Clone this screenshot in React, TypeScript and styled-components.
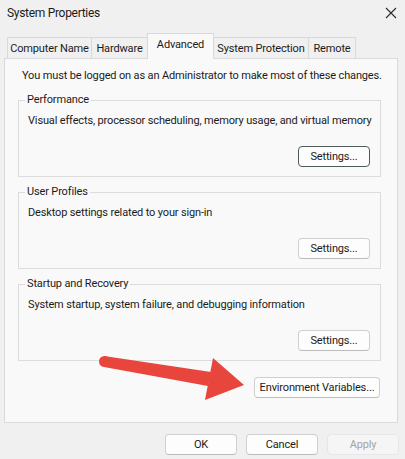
import React from 'react';
import styled, { createGlobalStyle, css } from 'styled-components';

const Global = createGlobalStyle`
  html, body { margin: 0; padding: 0; background: #f0f0f0; }
  body { font-family: Roboto, "Liberation Sans", Arial, sans-serif; }
`;

const Window = styled.div`
  position: relative;
  width: 405px;
  height: 459px;
  background: #f0f0f0;
  color: #1b1b1b;
  font-size: 11px;
  letter-spacing: -0.15px;
  display: flex;
  flex-direction: column;
  overflow: hidden;
`;

const TitleBar = styled.div`
  height: 26px;
  flex: none;
  display: flex;
  align-items: center;
  justify-content: space-between;
  padding: 0 8px 0 7px;
`;

const Title = styled.span`
  font-size: 12px;
  letter-spacing: -0.3px;
  color: #1b1b1b;
`;

const CloseIcon = styled.svg`
  width: 12px;
  height: 12px;
  display: block;
`;

const TabStrip = styled.div`
  height: 32px;
  flex: none;
  display: flex;
  align-items: flex-end;
  padding-left: 7px;
  position: relative;
  z-index: 1;
`;

const Tab = styled.div<{ $w: number; $active?: boolean }>`
  box-sizing: border-box;
  width: ${(p) => p.$w}px;
  height: ${(p) => (p.$active ? 26 : 21)}px;
  margin-bottom: ${(p) => (p.$active ? -1 : 0)}px;
  margin-left: -1px;
  border: 1px solid #d9d9d9;
  border-bottom: none;
  background: ${(p) => (p.$active ? '#f9f9f9' : '#f0f0f0')};
  display: flex;
  align-items: center;
  justify-content: center;
  padding-bottom: ${(p) => (p.$active ? 5 : 0)}px;
  font-size: 11px;
  color: #1b1b1b;
  white-space: nowrap;
  position: relative;
  z-index: ${(p) => (p.$active ? 2 : 1)};
  &:first-child { margin-left: 0; }
`;

const Panel = styled.div`
  box-sizing: border-box;
  height: 365px;
  flex: none;
  margin: 0 7px 0 4px;
  border: 1px solid #dadada;
  background: #f9f9f9;
  padding: 9px 16px 0 13px;
  display: flex;
  flex-direction: column;
`;

const Intro = styled.div`
  line-height: 16px;
  padding-left: 4px;
  font-size: 11px;
  white-space: nowrap;
`;

const Groups = styled.div`
  display: flex;
  flex-direction: column;
  gap: 8px;
  margin-top: 9px;
`;

const GroupBox = styled.fieldset`
  margin: 0;
  padding: 0 10px 9px 9px;
  border: 1px solid #dcdcdc;
  min-width: 0;
`;

const Legend = styled.legend`
  font-size: 11px;
  line-height: 14px;
  padding: 0 2px;
  margin-left: -3px;
  color: #1b1b1b;
`;

const Desc = styled.div`
  font-size: 11px;
  line-height: 16px;
  margin-top: 6px;
  white-space: nowrap;
`;

const ButtonRow = styled.div<{ $top: number; $right?: number }>`
  display: flex;
  justify-content: flex-end;
  gap: 9px;
  margin-top: ${(p) => p.$top}px;
  padding-right: ${(p) => p.$right ?? 0}px;
`;

const Button = styled.button<{ $w: number; $variant?: 'default' | 'focus' | 'disabled' }>`
  box-sizing: border-box;
  width: ${(p) => p.$w}px;
  height: 21px;
  padding: 0;
  font-family: inherit;
  font-size: 11px;
  letter-spacing: -0.15px;
  color: #1b1b1b;
  background: #fdfdfd;
  border: 1px solid #d0d0d0;
  border-bottom-color: #bcbcbc;
  border-radius: 4px;
  ${(p) =>
    p.$variant === 'focus' &&
    css`
      border: 1px solid #4f5b58;
    `}
  ${(p) =>
    p.$variant === 'disabled' &&
    css`
      background: #f5f5f5;
      border-color: #e6e6e6;
      color: #a3a3a3;
    `}
`;

const Footer = styled.div`
  flex: none;
  display: flex;
  justify-content: flex-end;
  gap: 9px;
  padding: 11px 6px 0 0;
`;

const ArrowLayer = styled.svg`
  position: absolute;
  left: 0;
  top: 0;
  width: 405px;
  height: 459px;
  pointer-events: none;
  z-index: 5;
`;

const groups = [
  {
    title: 'Performance',
    desc: 'Visual effects, processor scheduling, memory usage, and virtual memory',
    focus: true,
  },
  { title: 'User Profiles', desc: 'Desktop settings related to your sign-in' },
  { title: 'Startup and Recovery', desc: 'System startup, system failure, and debugging information' },
];

const tabs: { label: string; w: number; active?: boolean }[] = [
  { label: 'Computer Name', w: 85 },
  { label: 'Hardware', w: 57 },
  { label: 'Advanced', w: 67, active: true },
  { label: 'System Protection', w: 96 },
  { label: 'Remote', w: 48 },
];

export default function App() {
  return (
    <>
      <Global />
      <Window>
        <TitleBar>
          <Title>System Properties</Title>
          <CloseIcon viewBox="0 0 12 12">
            <path d="M1 1 L11 11 M11 1 L1 11" stroke="#2b2b2b" strokeWidth="1.1" fill="none" />
          </CloseIcon>
        </TitleBar>
        <TabStrip>
          {tabs.map((t) => (
            <Tab key={t.label} $w={t.w} $active={t.active}>
              {t.label}
            </Tab>
          ))}
        </TabStrip>
        <Panel>
          <Intro>You must be logged on as an Administrator to make most of these changes.</Intro>
          <Groups>
            {groups.map((g) => (
              <GroupBox key={g.title}>
                <Legend>{g.title}</Legend>
                <Desc>{g.desc}</Desc>
                <ButtonRow $top={17}>
                  <Button $w={72} $variant={g.focus ? 'focus' : 'default'}>
                    Settings...
                  </Button>
                </ButtonRow>
              </GroupBox>
            ))}
          </Groups>
          <ButtonRow $top={16} $right={1}>
            <Button $w={126}>Environment Variables...</Button>
          </ButtonRow>
        </Panel>
        <Footer>
          <Button $w={72}>OK</Button>
          <Button $w={72}>Cancel</Button>
          <Button $w={72} $variant="disabled">
            Apply
          </Button>
        </Footer>
        <ArrowLayer viewBox="0 0 405 459">
          <circle cx="104.5" cy="361.5" r="5.5" fill="#e8453c" />
          <polygon points="104,356 211,372 208,386 104,367" fill="#e8453c" />
          <polygon points="213,358 244,385 205,400" fill="#e8453c" />
        </ArrowLayer>
      </Window>
    </>
  );
}
